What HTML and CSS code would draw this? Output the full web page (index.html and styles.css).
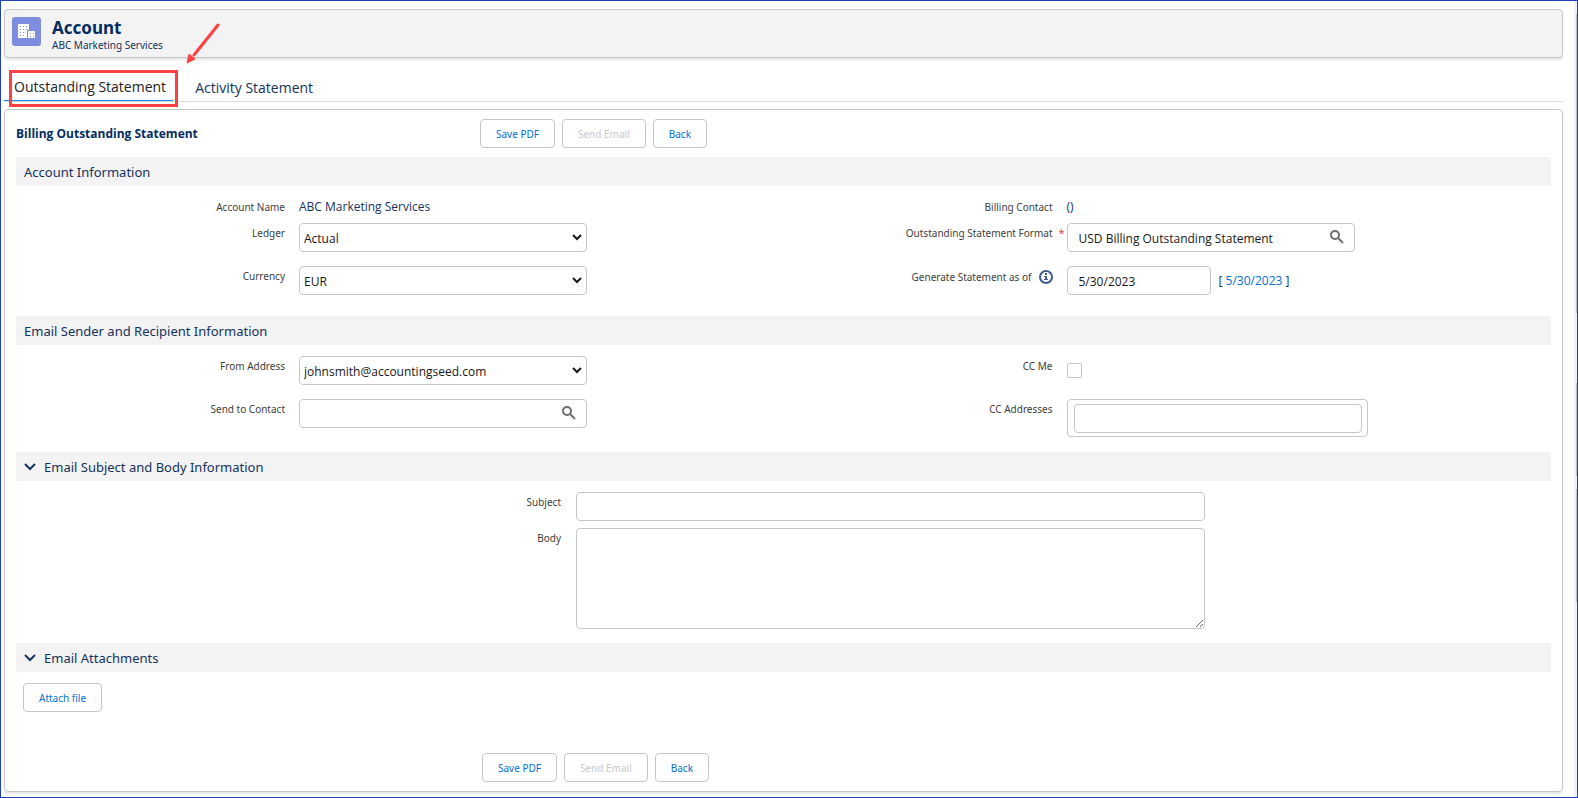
FILE: index.html
```html
<!DOCTYPE html>
<html lang="en">
<head>
<meta charset="utf-8">
<title>Billing Outstanding Statement</title>
<link rel="stylesheet" href="styles.css">
</head>
<body>
<div class="frame">
  <header class="page-header">
    <svg class="account-icon" viewBox="0 0 29 29" aria-hidden="true">
      <rect width="29" height="29" rx="3" fill="#7f8de1"/>
      <path fill="#fff" d="M6 7h11v6h-2v8H6zM16 14h7v7h-7z"/>
      <path fill="#7f8de1" d="M8 9h1v1H8zM11 9h1v1h-1zM14 9h1v1h-1zM8 12h1v1H8zM11 12h1v1h-1zM14 12h1v1h-1zM8 15h1v1H8zM11 15h1v1h-1zM8 18h1v1H8zM11 18h1v1h-1zM18 16h1v1h-1zM21 16h1v1h-1zM18 19h1v1h-1zM21 19h1v1h-1z"/>
    </svg>
    <div>
      <h1 class="page-title">Account</h1>
      <p class="page-subtitle">ABC Marketing Services</p>
    </div>
    <svg class="callout-arrow" viewBox="0 0 34 42" aria-hidden="true">
      <path d="M32 2 8 32" stroke="#fb4144" stroke-width="3" fill="none" stroke-linecap="round"/>
      <path d="M1 40 3 31 9 36Z" fill="#fb4144" stroke="#fb4144"/>
    </svg>
  </header>

  <nav class="tabs">
    <a class="tab tab-active" href="#outstanding">Outstanding Statement</a>
    <a class="tab" href="#activity">Activity Statement</a>
  </nav>

  <main class="card" id="outstanding">
    <div class="toolbar">
      <h2 class="card-title">Billing Outstanding Statement</h2>
      <div class="buttons">
        <button class="button" type="button">Save PDF</button>
        <button class="button" type="button" disabled>Send Email</button>
        <button class="button" type="button">Back</button>
      </div>
    </div>

    <h3 class="section-title">Account Information</h3>
    <div class="fields">
      <div class="row row-text">
        <span class="label">Account Name</span>
        <span class="value">ABC Marketing Services</span>
      </div>
      <div class="row row-text">
        <span class="label">Billing Contact</span>
        <span class="value">()</span>
      </div>
      <div class="row">
        <label class="label" for="ledger">Ledger</label>
        <div class="control">
          <select class="box select" id="ledger"><option>Actual</option></select>
          <svg class="select-arrow" viewBox="0 0 10 7" aria-hidden="true"><path d="M1 1l4 4 4-4"/></svg>
        </div>
      </div>
      <div class="row">
        <label class="label" for="format">Outstanding Statement Format</label>
        <div class="control">
          <span class="required">*</span>
          <input class="box input" id="format" type="text" value="USD Billing Outstanding Statement">
          <button class="lookup" type="button" aria-label="Look up format"><svg viewBox="0 0 14 14"><circle cx="5" cy="5" r="4"/><path d="M8 8l5 5"/></svg></button>
        </div>
      </div>
      <div class="row">
        <label class="label" for="currency">Currency</label>
        <div class="control">
          <select class="box select" id="currency"><option>EUR</option></select>
          <svg class="select-arrow" viewBox="0 0 10 7" aria-hidden="true"><path d="M1 1l4 4 4-4"/></svg>
        </div>
      </div>
      <div class="row">
        <label class="label label-info" for="asof">Generate Statement as of
          <svg class="info" viewBox="0 0 14 14" aria-hidden="true"><circle cx="7" cy="7" r="6"/><path d="M6 3h2v2H6zM5 6h3v3h1v1H5V9h1V7H5z"/></svg>
        </label>
        <div class="control control-date">
          <input class="box input" id="asof" type="text" value="5/30/2023">
          <span class="today">[ <a href="#today">5/30/2023</a> ]</span>
        </div>
      </div>
    </div>

    <h3 class="section-title">Email Sender and Recipient Information</h3>
    <div class="fields fields-email">
      <div class="row">
        <label class="label" for="from">From Address</label>
        <div class="control">
          <select class="box select" id="from"><option>johnsmith@accountingseed.com</option></select>
          <svg class="select-arrow" viewBox="0 0 10 7" aria-hidden="true"><path d="M1 1l4 4 4-4"/></svg>
        </div>
      </div>
      <div class="row">
        <label class="label" for="ccme">CC Me</label>
        <div class="control control-check"><input class="checkbox" id="ccme" type="checkbox"></div>
      </div>
      <div class="row">
        <label class="label" for="contact">Send to Contact</label>
        <div class="control">
          <input class="box input" id="contact" type="text">
          <button class="lookup" type="button" aria-label="Look up contact"><svg viewBox="0 0 14 14"><circle cx="5" cy="5" r="4"/><path d="M8 8l5 5"/></svg></button>
        </div>
      </div>
      <div class="row">
        <label class="label" for="cc">CC Addresses</label>
        <div class="nested"><input class="box input" id="cc" type="text"></div>
      </div>
    </div>

    <h3 class="section-title"><svg class="chevron" viewBox="0 0 12 8" aria-hidden="true"><path d="M1 1l5 5 5-5"/></svg>Email Subject and Body Information</h3>
    <div class="message">
      <label class="label" for="subject">Subject</label>
      <input class="box input" id="subject" type="text">
      <label class="label" for="body">Body</label>
      <textarea class="box textarea" id="body"></textarea>
    </div>

    <h3 class="section-title"><svg class="chevron" viewBox="0 0 12 8" aria-hidden="true"><path d="M1 1l5 5 5-5"/></svg>Email Attachments</h3>
    <div class="attachments">
      <button class="button" type="button">Attach file</button>
    </div>

    <div class="footer">
      <div class="buttons">
        <button class="button" type="button">Save PDF</button>
        <button class="button" type="button" disabled>Send Email</button>
        <button class="button" type="button">Back</button>
      </div>
    </div>
  </main>
  <div class="scroll-edge" aria-hidden="true"></div>
</div>
</body>
</html>
```
FILE: styles.css
```css
* { box-sizing: border-box; }

body {
  margin: 0;
  font-family: "Open Sans", "Noto Sans", sans-serif;
  font-size: 12px;
  color: #16325c;
  background: #fff;
}

h1, h2, h3, p { margin: 0; }
a { color: #0070d2; text-decoration: none; }
button, input, select, textarea { font: inherit; }

.frame {
  position: relative;
  min-height: 100vh;
  padding: 8px 14px 5px 3px;
  border: 1px solid #1f3fbb;
}

.page-header {
  position: relative;
  display: flex;
  gap: 11px;
  height: 49px;
  padding: 7px;
  border: 1px solid #c6c6c6;
  border-radius: 4px;
  background: #f3f3f3;
  box-shadow: 0 2px 2px rgba(0, 0, 0, 0.1);
}

.account-icon { width: 29px; height: 29px; }

.page-title {
  font-family: "Noto Sans", sans-serif;
  font-size: 17px;
  line-height: 22px;
  color: #032d60;
}

.page-subtitle {
  font-family: "Noto Sans", sans-serif;
  font-size: 10px;
  line-height: 12px;
}

.callout-arrow {
  position: absolute;
  z-index: 1;
  left: 181px;
  top: 13px;
  width: 34px;
  height: 42px;
}

.tabs {
  display: flex;
  height: 44px;
  padding-top: 14px;
  border-bottom: 1px solid #dddbda;
}

.tab {
  padding: 0 22px;
  font-size: 14px;
  line-height: 32px;
  color: #16325c;
}

.tab-active {
  position: relative;
  height: 29px;
  padding: 0 7px 0 10px;
  line-height: 30px;
  color: #222;
  border-bottom: 1px solid #1589ee;
}

.tab-active::after {
  content: "";
  position: absolute;
  inset: -2px -5px -7px 5px;
  border: 3px solid #fb4144;
}

.card {
  margin-top: 7px;
  padding: 9px 11px;
  border: 1px solid #c6c6c6;
  border-radius: 4px;
  box-shadow: 0 2px 2px rgba(0, 0, 0, 0.1);
}

.toolbar {
  display: grid;
  grid-template-columns: 464fr 1071fr;
  align-items: center;
  margin-bottom: 9px;
}

.card-title { font-size: 12px; color: #032d60; }

.buttons { display: flex; gap: 7px; }

.button {
  height: 29px;
  padding: 0 15px;
  border: 1px solid #c6c6c6;
  border-radius: 4px;
  background: #fff;
  font-family: "Noto Sans", sans-serif;
  font-size: 10px;
  color: #0070d2;
}

.button:disabled { color: #c9c7c5; }

.section-title {
  display: flex;
  align-items: center;
  height: 29px;
  padding: 0 8px;
  background: #f3f3f3;
  font-family: "Noto Sans", sans-serif;
  font-size: 13px;
  font-weight: 400;
}

.chevron { width: 12px; height: 8px; margin-right: 8px; }
.chevron path { fill: none; stroke: #16325c; stroke-width: 2; }

.fields {
  display: grid;
  grid-template-columns: 1fr 1fr;
  row-gap: 14px;
  padding: 11px 0 21px;
}

.fields-email { padding-bottom: 15px; }

.row {
  display: grid;
  grid-template-columns: 269px auto;
  column-gap: 14px;
  align-items: start;
  justify-content: start;
}

.row-text { height: 12px; }

.label {
  padding-top: 3px;
  font-family: "Noto Sans", sans-serif;
  font-size: 10px;
  line-height: 14px;
  text-align: right;
  color: #3e3e3c;
}

.label-info { display: flex; justify-content: flex-end; align-items: center; gap: 7px; padding-top: 4px; }
.info { width: 14px; height: 14px; }
.info circle { fill: none; stroke: #3f5b8c; stroke-width: 2; }
.info path { fill: #3f5b8c; }

.value { font-size: 12px; line-height: 20px; }

.control { position: relative; width: 288px; }

.box {
  display: block;
  width: 100%;
  height: 29px;
  border: 1px solid #c6c6c6;
  border-radius: 4px;
  background: #fff;
  color: #181818;
}

.input { padding: 1px 11px 0; }

.select { appearance: none; padding: 1px 4px 0; }

.select-arrow {
  position: absolute;
  right: 5px;
  top: 11px;
  width: 10px;
  height: 7px;
  pointer-events: none;
}

.select-arrow path { fill: none; stroke: #181818; stroke-width: 2; }

.lookup {
  position: absolute;
  right: 10px;
  top: 6px;
  width: 16px;
  height: 16px;
  padding: 1px;
  border: 0;
  background: none;
}

.lookup svg { display: block; width: 14px; height: 14px; }
.lookup circle, .lookup path { fill: none; stroke: #706e6b; stroke-width: 2; }

.required { position: absolute; left: -8px; top: 2px; font-size: 11px; color: #e52d34; }

.control-date { display: grid; grid-template-columns: 144px auto; align-items: center; gap: 8px; }

.control-check { height: 29px; padding: 7px 0; }

.checkbox {
  display: block;
  appearance: none;
  width: 15px;
  height: 15px;
  margin: 0;
  border: 1px solid #c6c6c6;
  border-radius: 2px;
}

.nested {
  width: 301px;
  padding: 4px 5px 3px 6px;
  border: 1px solid #c6c6c6;
  border-radius: 4px;
}

.message {
  display: grid;
  grid-template-columns: 545fr 629fr 331fr;
  gap: 7px 15px;
  align-items: start;
  padding: 11px 0 14px;
}

.message .label { grid-column: 1; }
.message .box { grid-column: 2; }
.textarea { height: 101px; resize: both; }

.attachments { padding: 11px 7px 41px; }

.footer {
  display: grid;
  grid-template-columns: 466fr 1069fr;
}

.footer .buttons { grid-column: 2; }

.scroll-edge {
  position: absolute;
  top: 0;
  right: 0;
  bottom: 0;
  width: 3px;
  background: linear-gradient(#c1c1c1, #c1c1c1) right 13px / 1px 299px no-repeat, linear-gradient(#c1c1c1, #c1c1c1) right 382px / 1px 93px no-repeat, linear-gradient(#c1c1c1, #c1c1c1) right 488px / 1px 113px no-repeat, #f1f1f1;
}
```
